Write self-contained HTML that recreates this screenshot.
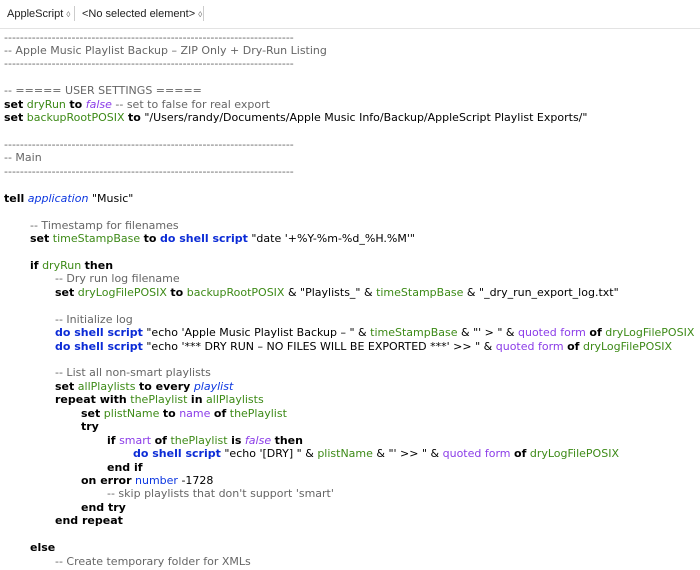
<!DOCTYPE html>
<html><head><meta charset="utf-8"><style>
body{margin:0;width:700px;height:570px;overflow:hidden;background:#fff;font-family:"DejaVu Sans","Liberation Sans",sans-serif;}
.tb{height:28px;border-bottom:1px solid #e3e3e3;font:11px "Liberation Sans",sans-serif;color:#222;position:relative}
.tb span{position:absolute;top:8px}
.tb i{font-style:normal;font-size:8px;color:#666}
.sep{position:absolute;top:6px;width:1px;height:15px;background:#ccc}
.code{position:absolute;top:30.5px;left:4px;font-size:11px;line-height:13.45px;color:#000}
.code div{height:13.45px;white-space:pre}
.c{color:#666}.v{color:#3d8a17}.k{font-weight:bold}.p{color:#8b3ce8}.pi{color:#8b3ce8;font-style:italic}
.b{color:#0b2bd6;font-weight:bold}.bi{color:#0b36e0;font-style:italic}.bl{color:#0b36e0}
.code .t1{padding-left:26px}.code .t2{padding-left:51px}.code .t3{padding-left:77px}.code .t4{padding-left:103px}.code .t5{padding-left:129px}
</style></head><body>
<div class="tb"><span style="left:7px">AppleScript <i>◊</i></span><div class="sep" style="left:74px"></div><span style="left:82px">&lt;No selected element&gt; <i>◊</i></span><div class="sep" style="left:203px"></div></div>
<div class="code"><div class="c">-------------------------------------------------------------------------</div><div class="c">-- Apple Music Playlist Backup – ZIP Only + Dry-Run Listing</div><div class="c">-------------------------------------------------------------------------</div><div></div><div class="c">-- ===== USER SETTINGS =====</div><div><span class="k">set</span> <span class="v">dryRun</span> <span class="k">to</span> <span class="pi">false</span> <span class="c">-- set to false for real export</span></div><div><span class="k">set</span> <span class="v">backupRootPOSIX</span> <span class="k">to</span> "/Users/randy/Documents/Apple Music Info/Backup/AppleScript Playlist Exports/"</div><div></div><div class="c">-------------------------------------------------------------------------</div><div class="c">-- Main</div><div class="c">-------------------------------------------------------------------------</div><div></div><div><span class="k">tell</span> <span class="bi">application</span> "Music"</div><div></div><div class="t1 c">-- Timestamp for filenames</div><div class="t1"><span class="k">set</span> <span class="v">timeStampBase</span> <span class="k">to</span> <span class="b">do shell script</span> "date '+%Y-%m-%d_%H.%M'"</div><div></div><div class="t1"><span class="k">if</span> <span class="v">dryRun</span> <span class="k">then</span></div><div class="t2 c">-- Dry run log filename</div><div class="t2"><span class="k">set</span> <span class="v">dryLogFilePOSIX</span> <span class="k">to</span> <span class="v">backupRootPOSIX</span> &amp; "Playlists_" &amp; <span class="v">timeStampBase</span> &amp; "_dry_run_export_log.txt"</div><div></div><div class="t2 c">-- Initialize log</div><div class="t2"><span class="b">do shell script</span> "echo 'Apple Music Playlist Backup – " &amp; <span class="v">timeStampBase</span> &amp; "' &gt; " &amp; <span class="p">quoted form</span> <span class="k">of</span> <span class="v">dryLogFilePOSIX</span></div><div class="t2"><span class="b">do shell script</span> "echo '*** DRY RUN – NO FILES WILL BE EXPORTED ***' &gt;&gt; " &amp; <span class="p">quoted form</span> <span class="k">of</span> <span class="v">dryLogFilePOSIX</span></div><div></div><div class="t2 c">-- List all non-smart playlists</div><div class="t2"><span class="k">set</span> <span class="v">allPlaylists</span> <span class="k">to every</span> <span class="bi">playlist</span></div><div class="t2"><span class="k">repeat with</span> <span class="v">thePlaylist</span> <span class="k">in</span> <span class="v">allPlaylists</span></div><div class="t3"><span class="k">set</span> <span class="v">plistName</span> <span class="k">to</span> <span class="p">name</span> <span class="k">of</span> <span class="v">thePlaylist</span></div><div class="t3 k">try</div><div class="t4"><span class="k">if</span> <span class="p">smart</span> <span class="k">of</span> <span class="v">thePlaylist</span> <span class="k">is</span> <span class="pi">false</span> <span class="k">then</span></div><div class="t5"><span class="b">do shell script</span> "echo '[DRY] " &amp; <span class="v">plistName</span> &amp; "' &gt;&gt; " &amp; <span class="p">quoted form</span> <span class="k">of</span> <span class="v">dryLogFilePOSIX</span></div><div class="t4 k">end if</div><div class="t3"><span class="k">on error</span> <span class="bl">number</span> -1728</div><div class="t4 c">-- skip playlists that don't support 'smart'</div><div class="t3 k">end try</div><div class="t2 k">end repeat</div><div></div><div class="t1 k">else</div><div class="t2 c">-- Create temporary folder for XMLs</div></div>
</body></html>
